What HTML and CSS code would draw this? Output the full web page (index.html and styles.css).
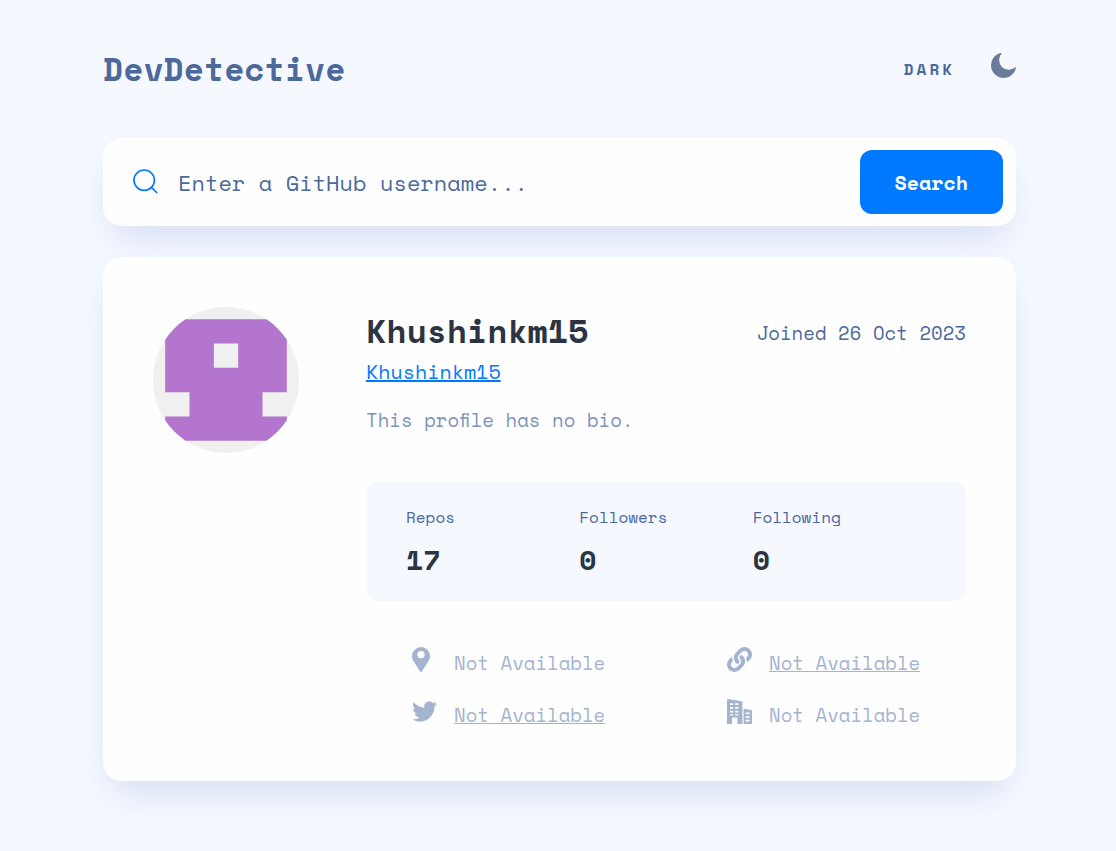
FILE: index.html
```html
<!DOCTYPE html>
<html lang="en">
<head>
  <meta charset="utf-8">
  <meta name="viewport" content="width=device-width, initial-scale=1">
  <title>DevDetective</title>
  <link rel="stylesheet" href="styles.css">
</head>
<body>
  <main class="page">
    <header class="header">
      <h1 class="brand">DevDetective</h1>
      <button class="mode" type="button">
        <span class="mode-text">DARK</span>
        <svg class="mode-icon" viewBox="0 0 20 20" aria-hidden="true"><path d="M19.513 11.397a.701.701 0 00-.588.128 7.496 7.496 0 01-2.276 1.336 7.101 7.101 0 01-2.583.462 7.505 7.505 0 01-5.32-2.209 7.568 7.568 0 01-2.199-5.342c0-.873.154-1.72.41-2.49a6.904 6.904 0 011.227-2.21.657.657 0 00-.102-.924.701.701 0 00-.589-.128C5.32.61 3.427 1.92 2.072 3.666A10.158 10.158 0 000 9.83c0 2.8 1.125 5.342 2.967 7.19a10.025 10.025 0 007.16 2.98c2.353 0 4.527-.822 6.266-2.183a10.13 10.13 0 003.58-5.624.623.623 0 00-.46-.796z"/></svg>
      </button>
    </header>

    <form class="search" action="#">
      <label class="search-label" for="username" aria-label="GitHub username">
        <svg class="search-icon" viewBox="0 0 25 25" aria-hidden="true"><circle cx="11.2" cy="11.2" r="10.2"/><path d="M18.4 18.4l5.8 5.6"/></svg>
      </label>
      <input class="search-input" id="username" type="text" placeholder="Enter a GitHub username...">
      <button class="search-button" type="submit">Search</button>
    </form>

    <section class="card">
      <svg class="avatar" viewBox="0 0 420 420" role="img" aria-label="Khushinkm15 avatar">
        <rect width="420" height="420" fill="#f0f0f0"/>
        <path fill="#b375cd" fill-rule="evenodd" d="M35 35H385V245H315V315H385V385H35V315H105V245H35ZM175 105V175H245V105Z"/>
      </svg>
      <div class="profile">
        <div class="profile-top">
          <h2 class="name">Khushinkm15</h2>
          <p class="joined">Joined 26 Oct 2023</p>
        </div>
        <a class="handle" href="#">Khushinkm15</a>
        <p class="bio">This profile has no bio.</p>

        <dl class="stats">
          <div class="stat"><dt>Repos</dt><dd>17</dd></div>
          <div class="stat"><dt>Followers</dt><dd>0</dd></div>
          <div class="stat"><dt>Following</dt><dd>0</dd></div>
        </dl>

        <ul class="info">
          <li class="info-item">
            <span class="info-icon"><svg width="18" height="25" viewBox="0 0 18 25" aria-hidden="true"><path fill-rule="evenodd" d="M9 0a9 9 0 0 0-9 9c0 2.200.7 3.800 1.700 5.400L8.100 24.500a1 1 0 0 0 1.700 0L16.300 14.400C17.300 12.800 18 11.200 18 9a9 9 0 0 0-9-9ZM9 3.900a3.700 3.700 0 1 1 0 7.400a3.700 3.700 0 0 1 0-7.400Z"/></svg></span>
            <span>Not Available</span>
          </li>
          <li class="info-item">
            <span class="info-icon"><svg width="25" height="25" viewBox="0 0 512 512" aria-hidden="true"><path d="M326.612 185.391c59.747 59.809 58.927 155.698.36 214.59-.11.12-.24.25-.36.37l-67.2 67.2c-59.27 59.27-155.699 59.262-214.96 0-59.27-59.26-59.27-155.7 0-214.96l37.106-37.106c9.84-9.84 26.786-3.3 27.294 10.606.648 17.722 3.826 35.527 9.69 52.721 1.986 5.822.567 12.262-3.783 16.612l-13.087 13.087c-28.026 28.026-28.905 73.66-1.155 101.96 28.024 28.579 74.086 28.749 102.325.51l67.2-67.19c28.191-28.191 28.073-73.757 0-101.83-3.701-3.694-7.429-6.564-10.341-8.569a16.037 16.037 0 0 1-6.947-12.606c-.396-10.567 3.348-21.456 11.698-29.806l21.054-21.055c5.521-5.521 14.182-6.199 20.584-1.731a152.482 152.482 0 0 1 20.522 17.197zM467.547 44.449c-59.261-59.262-155.69-59.27-214.96 0l-67.2 67.2c-.12.12-.25.25-.36.37-58.566 58.892-59.387 154.781.36 214.59a152.454 152.454 0 0 0 20.521 17.196c6.402 4.468 15.064 3.789 20.584-1.731l21.054-21.055c8.35-8.35 12.094-19.239 11.698-29.806a16.037 16.037 0 0 0-6.947-12.606c-2.912-2.005-6.64-4.875-10.341-8.569-28.073-28.073-28.191-73.639 0-101.83l67.2-67.19c28.239-28.239 74.3-28.069 102.325.51 27.75 28.3 26.872 73.934-1.155 101.96l-13.087 13.087c-4.35 4.35-5.769 10.79-3.783 16.612 5.864 17.194 9.042 34.999 9.69 52.721.509 13.906 17.454 20.446 27.294 10.606l37.106-37.106c59.271-59.259 59.271-155.699.001-214.959z"/></svg></span>
            <a class="info-link" href="#">Not Available</a>
          </li>
          <li class="info-item">
            <span class="info-icon"><svg width="25" height="25" viewBox="0 -1 20 20" aria-hidden="true"><path d="M20 2.799a8.549 8.549 0 01-2.363.647 4.077 4.077 0 001.804-2.266 8.194 8.194 0 01-2.6.993A4.099 4.099 0 009.75 4.977c0 .324.027.637.095.934-3.409-.166-6.425-1.8-8.452-4.288a4.128 4.128 0 00-.56 2.072c0 1.42.73 2.679 1.821 3.408A4.05 4.05 0 01.8 6.598v.045a4.119 4.119 0 003.285 4.028 4.092 4.092 0 01-1.075.135c-.263 0-.528-.015-.776-.07.531 1.624 2.038 2.818 3.831 2.857A8.239 8.239 0 01.981 15.34 7.68 7.68 0 010 15.285a11.543 11.543 0 006.29 1.84c7.545 0 11.67-6.25 11.67-11.667 0-.182-.006-.357-.015-.53A8.18 8.18 0 0020 2.798z"/></svg></span>
            <a class="info-link" href="#">Not Available</a>
          </li>
          <li class="info-item">
            <span class="info-icon"><svg width="25" height="25" viewBox="0 0 25 25" aria-hidden="true"><path fill-rule="evenodd" d="M1 0L14.500 2.200Q15.400 2.400 15.400 3.200V25H10.400V18.500H5V25H0V1Q0 0 1 0ZM3 4.200V6H6.200V4.200ZM8.200 4.200V6H11.400V4.200ZM3 8V9.800H6.200V8ZM8.200 8V9.800H11.400V8ZM3 11.800V13.600H6.200V11.800ZM8.200 11.800V13.600H11.400V11.800ZM3 15.200V16.600H6.200V15.200ZM8.200 15.200V16.600H11.400V15.200ZM16.600 9.500L24 11Q25 11.200 25 12.100V24Q25 25 24 25H16.600ZM18.600 13.600V15.300H22.600V13.600ZM18.600 17.200V18.900H22.600V17.200ZM18.600 20.800V22.500H22.600V20.800Z"/></svg></span>
            <span>Not Available</span>
          </li>
        </ul>
      </div>
    </section>
  </main>
</body>
</html>
```
FILE: styles.css
```css
:root {
  --bg: #f5f8ff;
  --surface: #fefefe;
  --text: #4b6a9b;
  --strong: #2b3442;
  --accent: #0079ff;
  --muted: #a4b4cf;
  --shadow: 0 20px 38px -12px rgba(70, 96, 187, 0.2);
}

* {
  box-sizing: border-box;
}

body,
h1,
h2,
p,
dl,
dd,
ul {
  margin: 0;
  padding: 0;
}

body {
  background: var(--bg);
  color: var(--text);
  font-family: "Space Mono", "Liberation Mono", monospace;
}

button,
input {
  font: inherit;
  color: inherit;
  border: 0;
}

.page {
  max-width: 964px;
  margin: 0 auto;
  padding: 40px 24px 70px 27px;
}

.header {
  display: flex;
  justify-content: space-between;
  align-items: center;
  height: 58px;
  margin-bottom: 40px;
}

.brand {
  font-size: 33px;
  line-height: 48px;
}

.mode {
  display: flex;
  align-items: center;
  gap: 36px;
  padding: 0;
  background: none;
  font-size: 16px;
  font-weight: 700;
  line-height: 24px;
  cursor: pointer;
}

.mode-text {
  letter-spacing: 3px;
}

.mode-icon {
  width: 25px;
  height: 25px;
  margin-bottom: 8px;
  fill: #697c9a;
}

.search {
  display: flex;
  align-items: center;
  padding: 12px 13px 12px 30px;
  margin-bottom: 31px;
  border-radius: 19px;
  background: var(--surface);
  box-shadow: var(--shadow);
}

.search-label {
  display: flex;
  margin-bottom: 2px;
}

.search-icon {
  width: 25px;
  height: 25px;
  fill: none;
  stroke: var(--accent);
  stroke-width: 1.7;
}

.search-input {
  flex: 1;
  min-width: 0;
  padding: 2px 20px 0;
  background: none;
  font-size: 22px;
  line-height: 32px;
  outline: none;
}

.search-input::placeholder {
  color: var(--text);
  opacity: 1;
}

.search-button {
  padding: 18px 35px 16px;
  border-radius: 12px;
  background: var(--accent);
  color: #fff;
  font-size: 20px;
  font-weight: 700;
  line-height: 30px;
  cursor: pointer;
}

.card {
  display: flex;
  align-items: flex-start;
  gap: 67px;
  padding: 50px;
  border-radius: 19px;
  background: var(--surface);
  box-shadow: var(--shadow);
}

.avatar {
  flex: none;
  width: 146px;
  height: 146px;
  border-radius: 50%;
}

.profile {
  flex: 1;
  min-width: 0;
}

.profile-top {
  display: flex;
  justify-content: space-between;
  align-items: center;
}

.name {
  color: var(--strong);
  font-size: 33px;
  line-height: 48px;
}

.joined {
  padding-top: 4px;
  font-size: 19px;
  line-height: 28px;
}

.handle {
  display: block;
  width: fit-content;
  color: var(--accent);
  font-size: 20px;
  line-height: 34px;
}

.bio {
  margin: 17px 0 48px;
  color: #7c93b9;
  font-size: 19px;
  font-variant-ligatures: common-ligatures discretionary-ligatures;
  line-height: 28px;
}

.stats {
  display: grid;
  grid-template-columns: repeat(3, 1fr);
  padding: 23px 40px 21px;
  border-radius: 12px;
  background: var(--bg);
}

.stat dt {
  font-size: 16px;
  line-height: 24px;
}

.stat dd {
  margin-top: 11px;
  color: var(--strong);
  font-size: 28px;
  font-weight: 700;
  line-height: 40px;
}

.info {
  display: grid;
  grid-template-columns: repeat(2, 1fr);
  gap: 20px 76px;
  margin-top: 46px;
  padding-left: 46px;
  list-style: none;
  color: var(--muted);
  font-size: 19px;
  line-height: 32px;
}

.info-item {
  display: flex;
  align-items: flex-start;
  gap: 17px;
  white-space: nowrap;
}

.info-icon {
  display: flex;
  flex: none;
  width: 25px;
}

.info-icon svg {
  fill: currentColor;
}

.info-link {
  color: inherit;
}

@media (max-width: 860px) {
  .card {
    flex-direction: column;
    gap: 30px;
  }

  .profile {
    width: 100%;
  }

  .profile-top {
    flex-wrap: wrap;
  }

  .info {
    grid-template-columns: 1fr;
    padding-left: 0;
  }
}
```
